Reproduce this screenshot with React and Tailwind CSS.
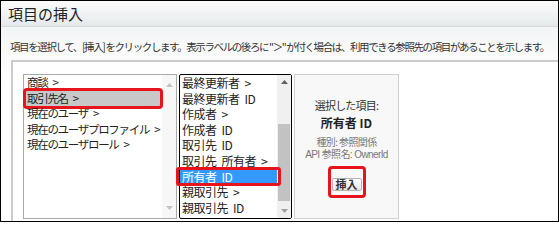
const JP = { fontFamily: '"Noto Sans CJK JP", "Noto Sans", sans-serif' };

const leftItems = [
  ['商談', true],
  ['取引先名', true],
  ['現在のユーザ', true],
  ['現在のユーザプロファイル', true],
  ['現在のユーザロール', true],
];
const rightItems = [
  ['最終更新者', true],
  ['最終更新者 ID', false],
  ['作成者', true],
  ['作成者 ID', false],
  ['取引先 ID', false],
  ['取引先 所有者', true],
  ['所有者 ID', false],
  ['親取引先', true],
  ['親取引先 ID', false],
];

function Arrow({ up, color }) {
  return (
    <svg width="7" height="4" viewBox="0 0 7 4">
      <path d={up ? 'M0 4 L3.5 0 L7 4 Z' : 'M0 0 L3.5 4 L7 0 Z'} fill={color} />
    </svg>
  );
}

function Label({ text, more }) {
  const parts = text.split(' ');
  return (
    <span className="flex items-baseline gap-[5px] whitespace-nowrap">
      {parts.map((p, i) => (
        <span key={i}>{p}</span>
      ))}
      {more && <span>&gt;</span>}
    </span>
  );
}

export default function App() {
  return (
    <div className="flex h-[222px] w-[559px] flex-col overflow-hidden border border-black bg-white text-[#222]" style={JP}>
      <div className="flex h-[26px] shrink-0 items-center border-b border-[#d5d9dc] bg-gradient-to-b from-[#fbfbfb] to-[#e6e9eb] px-[7px] text-[15px] leading-none">
        項目の挿入
      </div>

      <div className="flex flex-1 flex-col bg-gradient-to-b from-[#f4f5f6] to-white to-30%">
        <p className="mt-[13px] whitespace-nowrap pl-[9px] text-[10.5px] leading-[14px] tracking-[-1.4px] text-[#333]">
          項目を選択して、[挿入] をクリックします。表示ラベルの後ろに "＞" が付く場合は、利用できる参照先の項目があることを示します。
        </p>

        <div className="ml-[10px] mt-[6px] flex flex-1 gap-[2px] border-l-2 border-t-2 border-[#cbcbcb] bg-white pl-[10px] pt-[12px]">
          {/* first list */}
          <div className="flex h-[145px] w-[154px] border border-[#a9a9a9] bg-white">
            <div className="min-w-0 flex-1 text-[11.5px] leading-[15.6px] tracking-[-1.3px]">
              {leftItems.map(([t, more], i) => (
                <div key={t} className={`relative pl-[3px] ${i === 1 ? 'bg-[#c8c8c8]' : ''}`}>
                  <Label text={t} more={more} />
                  {i === 1 && <span className="absolute -inset-x-[1px] -inset-y-[3px] rounded-[4px] border-[3px] border-[#e8141c]" />}
                </div>
              ))}
            </div>
            <div className="flex w-[14px] shrink-0 flex-col items-center justify-between bg-[#f7f7f7] py-[8px]">
              <Arrow up color="#c4c4c4" />
              <Arrow color="#c4c4c4" />
            </div>
          </div>

          {/* second list */}
          <div className="flex h-[145px] w-[113px] rounded-[2px] border border-black bg-white">
            <div className="min-w-0 flex-1 text-[12px] leading-[15.6px] tracking-[-0.5px]">
              {rightItems.map(([t, more], i) => (
                <div key={t} className={`relative pl-[2px] ${i === 6 ? 'bg-[#3399ff] text-white' : ''}`}>
                  <Label text={t} more={more} />
                  {i === 6 && <span className="absolute -inset-x-[4px] -inset-y-[2px] rounded-[3px] border-[3px] border-[#e8141c]" />}
                </div>
              ))}
            </div>
            <div className="flex w-[14px] shrink-0 flex-col items-center bg-[#f0f0f0]">
              <div className="flex h-[14px] items-center justify-center"><Arrow up color="#606060" /></div>
              <div className="mt-[35px] h-[77px] w-[12px] bg-[#c2c2c2]" />
              <div className="mt-auto flex h-[14px] items-center justify-center"><Arrow color="#a0a0a0" /></div>
            </div>
          </div>

          {/* details */}
          <div className="flex h-[145px] w-[105px] flex-col items-center border border-[#d0d0d0] bg-[#f8f8f8] pt-[23px] text-center">
            <div className="text-[11px] leading-[14px] tracking-[-0.8px] text-[#333]">選択した項目:</div>
            <div className="mt-[3px] text-[12px] font-bold leading-[15px]">所有者 ID</div>
            <div className="mt-[6px] text-[10px] leading-[12px] tracking-[-0.6px] text-[#777]">種別: 参照関係</div>
            <div className="mt-[1px] text-[10px] leading-[12px] tracking-[-0.6px] text-[#777]" style={{ fontFamily: '"Liberation Sans", "Noto Sans CJK JP", sans-serif' }}>API 参照名: OwnerId</div>
            <div className="mt-[5px] rounded-[4px] border-[3px] border-[#e8141c] p-[1px]">
              <button className="rounded-[2px] border border-[#b5b5b5] bg-gradient-to-b from-white to-[#e6e6e6] px-[3px] text-[11px] font-bold leading-[11px] text-[#333]">
                挿入
              </button>
            </div>
          </div>
        </div>
      </div>
    </div>
  );
}
